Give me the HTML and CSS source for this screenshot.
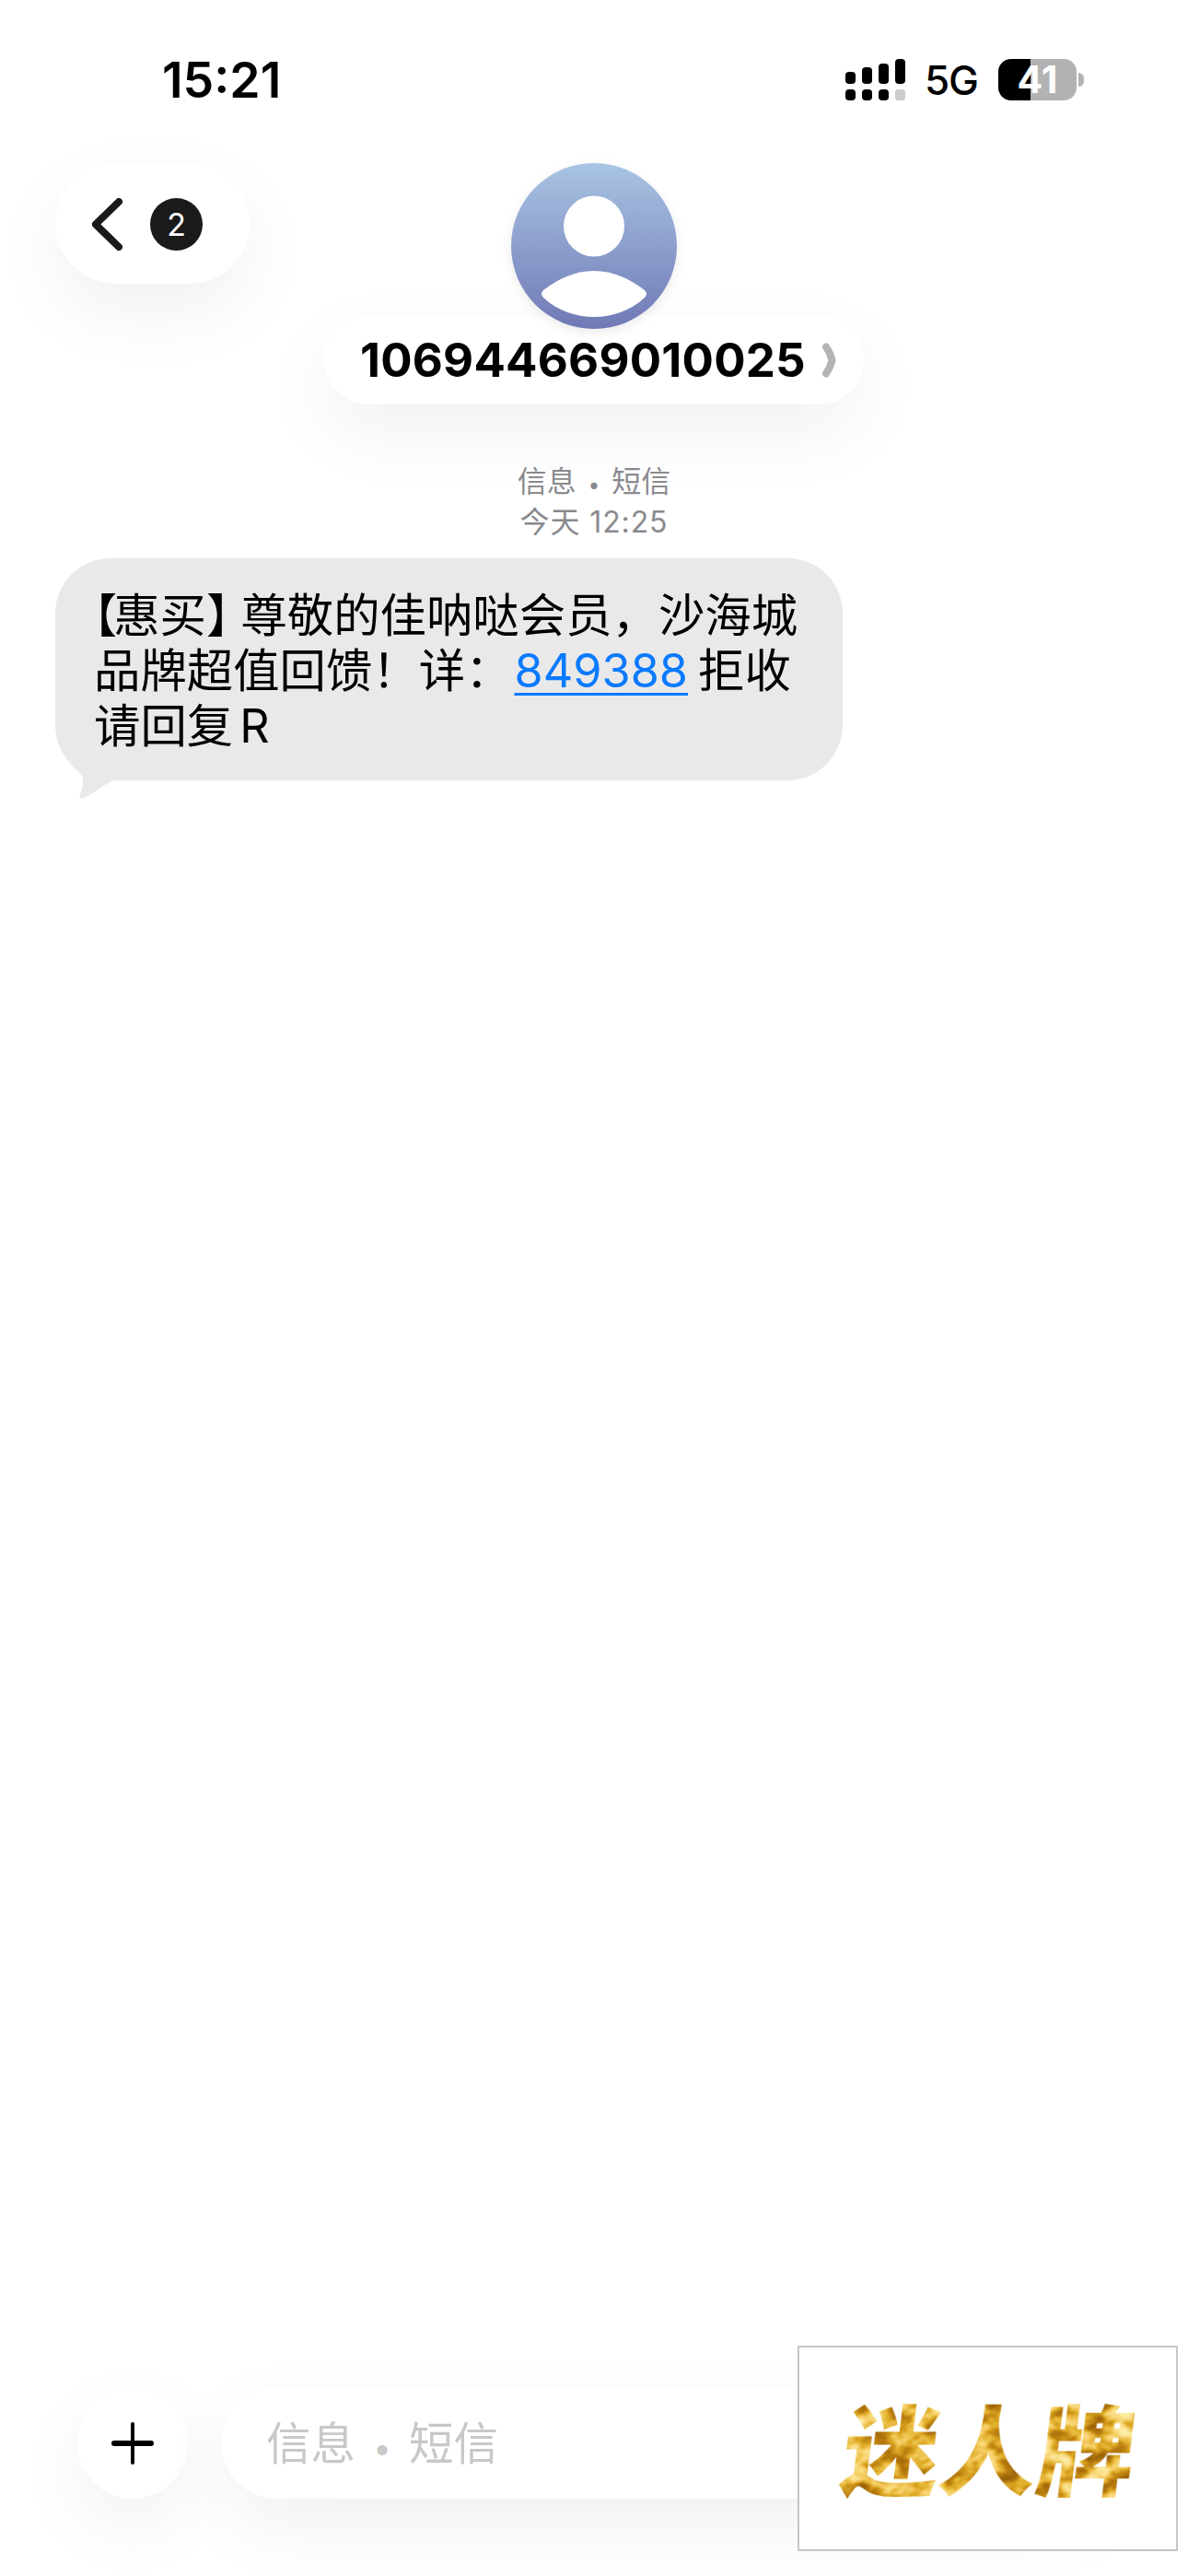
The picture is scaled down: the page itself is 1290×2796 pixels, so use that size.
FILE: index.html
```html
<!DOCTYPE html>
<html lang="zh-CN">
<head>
<meta charset="utf-8">
<title>106944669010025</title>
<link rel="stylesheet" href="styles.css">
</head>
<body>
<main class="screen">
  <header class="status">
    <span class="time">15:21</span>
    <div class="status-right">
      <svg class="signal" width="65" height="45" viewBox="0 0 65 45">
        <rect x="0" y="14" width="11" height="13" rx="4"/>
        <rect x="18" y="9" width="11" height="18" rx="4"/>
        <rect x="36" y="5" width="11" height="22" rx="4"/>
        <rect x="54" y="0" width="11" height="27" rx="4"/>
        <rect x="0" y="33" width="11" height="12" rx="4"/>
        <rect x="18" y="33" width="11" height="12" rx="4"/>
        <rect x="36" y="33" width="11" height="12" rx="4"/>
        <rect class="signal-off" x="54" y="33" width="11" height="12" rx="3"/>
      </svg>
      <span class="net">5G</span>
      <div class="battery">
        <span class="battery-level">41</span>
        <span class="battery-nub"></span>
      </div>
    </div>
  </header>

  <section class="nav">
    <div class="nav-left">
      <div class="back">
        <svg class="back-icon" width="33" height="57" viewBox="0 0 33 57">
          <path d="M29 4 L3.8 28.5 L29 53"/>
        </svg>
        <span class="badge">2</span>
      </div>
    </div>
    <div class="contact">
      <svg class="avatar" width="180" height="180" viewBox="0 0 180 180">
        <defs>
          <linearGradient id="avatarFill" x1="0" y1="0" x2="0" y2="1">
            <stop offset="0" stop-color="#a9c4e3"/>
            <stop offset="1" stop-color="#7079b6"/>
          </linearGradient>
        </defs>
        <circle cx="90" cy="90" r="90" fill="url(#avatarFill)"/>
        <circle cx="90" cy="68.5" r="33" fill="#fff"/>
        <path fill="#fff" d="M35 138 C50 126 70 117 90 117 C110 117 130 126 145 138 Q149 142 145 146 C130 160 110 167 90 167 C70 167 50 160 35 146 Q31 142 35 138Z"/>
      </svg>
      <div class="name-pill">
        <span class="name">106944669010025</span>
        <svg class="name-chevron" width="16" height="38" viewBox="0 0 16 38">
          <path d="M5 4.5 Q10 12 11.5 19 Q10 26 5 33.5"/>
        </svg>
      </div>
    </div>
  </section>

  <section class="meta">
    <div>信息 <span class="dot">•</span> 短信</div>
    <div class="meta-time">今天 12:25</div>
  </section>

  <section class="thread">
    <div class="bubble">
      <svg class="tail" width="72" height="70" viewBox="0 0 72 70">
        <path d="M3 0 C8 16 18 28 26 34 C32 40 31 48 27 58 C25 63 29 64 34 61 C44 55 54 47 64 43 L72 43 L72 0 Z"/>
      </svg>
      <p class="msg"><span class="br-open">【</span>惠买<span class="br-close">】</span>尊敬的佳呐哒会员，沙海城<br>品牌超值回馈！详：<a class="link">849388</a><span class="lat-gap">拒收</span><br>请回复<span class="lat">R</span></p>
    </div>
  </section>

  <footer class="composer">
    <div class="plus">
      <svg width="46" height="46" viewBox="0 0 46 46">
        <rect x="21" y="0" width="4" height="46" rx="2"/>
        <rect x="0" y="20" width="46" height="6" rx="3"/>
      </svg>
    </div>
    <div class="field">信息 <span class="dot">•</span> 短信</div>
  </footer>

  <aside class="watermark">
    <svg class="filter-defs" width="0" height="0">
      <filter id="marble" x="0" y="0" width="100%" height="100%" color-interpolation-filters="sRGB">
        <feTurbulence type="fractalNoise" baseFrequency=".035 .05" numOctaves="3" seed="7"/>
        <feColorMatrix type="matrix" values="1 0 0 0 0  1 0 0 0 0  1 0 0 0 0  0 0 0 0 1"/>
        <feComponentTransfer>
          <feFuncR type="table" tableValues=".55 .55 .62 .74 .88 .97 .99 1 1"/>
          <feFuncG type="table" tableValues=".34 .34 .40 .50 .68 .82 .91 .95 .95"/>
          <feFuncB type="table" tableValues=".04 .04 .04 .06 .16 .42 .62 .7 .7"/>
        </feComponentTransfer>
        <feComposite in2="SourceAlpha" operator="in"/>
      </filter>
    </svg>
    <span class="gold">迷人牌</span>
  </aside>
</main>
</body>
</html>
```
FILE: styles.css
```css
* { box-sizing: border-box; }
html, body { margin: 0; padding: 0; background: #fff; }
body { font-family: Inter, "Noto Sans CJK SC", sans-serif; color: #000; }

.screen {
  position: relative;
  width: 1290px;
  height: 2796px;
  overflow: hidden;
  display: flex;
  flex-direction: column;
  background: #fff;
}

/* status bar */
.status {
  height: 177px;
  padding: 0 113px 4px 176px;
  display: flex;
  align-items: center;
  justify-content: space-between;
}
.time { font-size: 53.5px; font-weight: 600; }
.status-right { display: flex; align-items: center; }
.signal { fill: #000; display: block; }
.signal-off { fill: #cccccc; }
.net { font-size: 44px; font-weight: 500; margin-left: 21px; margin-right: 22px; letter-spacing: -1px; }
.battery { display: flex; align-items: center; gap: 2px; }
.battery-level {
  width: 85px;
  height: 45px;
  border-radius: 14px;
  background: linear-gradient(90deg, #000 41%, #b2b2b2 41%);
  color: #fff;
  font-size: 41px;
  font-weight: 700;
  line-height: 45px;
  text-align: center;
}
.battery-nub {
  width: 6px;
  height: 15px;
  border-radius: 0 6px 6px 0;
  background: #b2b2b2;
}

/* navigation */
.nav {
  display: grid;
  grid-template-columns: 1fr auto 1fr;
  align-items: start;
}
.nav-left { padding-left: 60px; }
.back {
  width: 211px;
  height: 131px;
  border-radius: 66px;
  background: #fff;
  box-shadow: 0 30px 80px rgba(0, 0, 0, .06);
  display: flex;
  align-items: center;
  padding: 2px 0 0 40px;
  gap: 30px;
}
.back-icon { fill: none; stroke: #1a1a1a; stroke-width: 8; stroke-linecap: round; stroke-linejoin: round; display: block; }
.badge {
  width: 57px;
  height: 57px;
  border-radius: 50%;
  background: #1a1a1a;
  color: #fff;
  font-size: 34px;
  line-height: 57px;
  text-align: center;
}
.contact { display: flex; flex-direction: column; align-items: center; }
.avatar { display: block; position: relative; z-index: 1; margin-bottom: -15px; filter: drop-shadow(0 4px 6px rgba(0, 0, 0, .08)); }
.name-pill {
  width: 586px;
  height: 97px;
  border-radius: 49px;
  background: #fff;
  box-shadow: 0 30px 80px rgba(0, 0, 0, .06);
  display: flex;
  align-items: center;
  padding-left: 39px;
  gap: 17px;
}
.name { font-size: 51px; font-weight: 700; letter-spacing: .2px; line-height: 1; }
.name-chevron { fill: none; stroke: #b4b4b4; stroke-width: 8; stroke-linecap: round; stroke-linejoin: round; display: block; }

/* timestamp */
.meta {
  margin-top: 62px;
  text-align: center;
  color: #8a8a8e;
  font-size: 32px;
  line-height: 44px;
}
.meta-time { letter-spacing: .9px; }
.dot { font-size: .72em; line-height: 1; margin: 0 .16em; }

/* message */
.thread { padding: 17px 0 0 60px; }
.bubble {
  position: relative;
  width: 855px;
  height: 241px;
  padding: 32px 0 0 42px;
  border-radius: 60px;
  background: #e9e9e9;
}
.tail { position: absolute; left: 0; top: 198px; fill: #e9e9e9; display: block; }
.msg {
  position: relative;
  margin: 0;
  font-size: 50.4px;
  line-height: 60px;
  white-space: nowrap;
  color: #000;
}
.br-open { font-feature-settings: "halt"; letter-spacing: -4px; }
.br-close { letter-spacing: -13px; }
.link { color: #0a7aff; text-decoration: underline; text-decoration-thickness: 3px; text-underline-offset: 6px; margin-left: 3px; }
.lat-gap { margin-left: 11px; }
.lat { margin-left: 7px; }

/* composer */
.composer {
  margin-top: auto;
  padding: 0 84px 84px;
  display: flex;
  align-items: center;
  gap: 36px;
}
.plus {
  flex: none;
  width: 120px;
  height: 120px;
  border-radius: 50%;
  background: #fff;
  box-shadow: 0 30px 80px rgba(0, 0, 0, .06);
  display: flex;
  align-items: center;
  justify-content: center;
}
.plus svg { fill: #000; display: block; }
.field {
  flex: 1;
  height: 121px;
  border-radius: 61px;
  background: #fff;
  box-shadow: 0 30px 80px rgba(0, 0, 0, .06);
  padding: 2px 0 0 49px;
  font-size: 48.5px;
  line-height: 119px;
  color: #c8c8c8;
}

/* watermark */
.watermark {
  position: absolute;
  left: 866px;
  top: 2546px;
  width: 413px;
  height: 223px;
  background: #fff;
  border: 2px solid #c6c6c6;
  padding: 46px 0 0 48px;
}
.filter-defs { position: absolute; }
.gold {
  display: block;
  width: 330px;
  font-size: 106px;
  line-height: 120px;
  font-family: "Noto Sans CJK SC", sans-serif;
  font-weight: 900;
  white-space: nowrap;
  color: #000;
  transform: skewX(-7deg);
  filter: url(#marble);
}
```
